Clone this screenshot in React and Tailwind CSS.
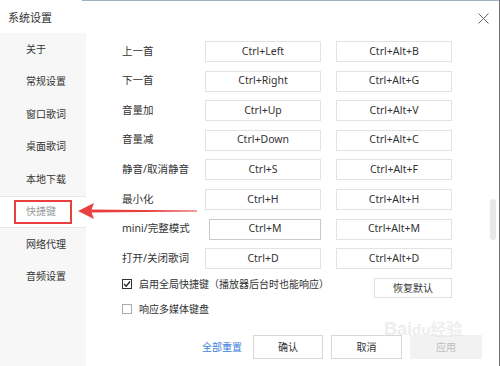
import React from "react";

const font = { fontFamily: '"Noto Sans", "Noto Sans CJK SC", sans-serif' };

const rows = [
  ["上一首", "Ctrl+Left", "Ctrl+Alt+B"],
  ["下一首", "Ctrl+Right", "Ctrl+Alt+G"],
  ["音量加", "Ctrl+Up", "Ctrl+Alt+V"],
  ["音量减", "Ctrl+Down", "Ctrl+Alt+C"],
  ["静音/取消静音", "Ctrl+S", "Ctrl+Alt+F"],
  ["最小化", "Ctrl+H", "Ctrl+Alt+H"],
  ["mini/完整模式", "Ctrl+M", "Ctrl+Alt+M"],
  ["打开/关闭歌词", "Ctrl+D", "Ctrl+Alt+D"],
];

const side = ["关于", "常规设置", "窗口歌词", "桌面歌词", "本地下载", "快捷键", "网络代理", "音频设置"];

export default function App() {
  return (
    <div
      className="relative w-[500px] h-[366px] bg-white overflow-hidden flex flex-col border-r border-[#707070] text-[#333]"
      style={font}
    >
      <div className="flex h-px shrink-0">
        <div className="w-[82px] bg-white" />
        <div className="flex-1 bg-[#9fb0c4]" />
      </div>
      <div className="h-[32px] shrink-0 flex items-center justify-between pl-[8px] pr-[10px]">
        <span className="text-[11px] leading-none text-[#333]">系统设置</span>
        <svg width="11" height="11" viewBox="0 0 11 11" className="mt-[2px]">
          <path d="M0.5 0.5 L10.5 10.5 M10.5 0.5 L0.5 10.5" stroke="#666" strokeWidth="1" fill="none" />
        </svg>
      </div>
      <div className="flex-1 flex min-h-0">
        <div className="w-[86px] shrink-0 bg-[#f7f7f7] flex flex-col">
          {side.map((s) =>
            s === "快捷键" ? (
              <div
                key={s}
                className="h-[32.5px] flex items-center pl-[26px] bg-white border-y border-[#e6e6e6] text-[10px] text-[#999]"
              >
                {s}
              </div>
            ) : (
              <div key={s} className="h-[32.5px] flex items-center pl-[26px] text-[10px] text-[#333]">
                {s}
              </div>
            )
          )}
        </div>
        <div className="flex-1 flex flex-col pl-[36px] pt-[8px]">
          <div className="flex flex-col gap-[8.6px]">
            {rows.map(([l, a, b], i) => (
              <div key={l} className="flex items-center h-[21px]">
                <div className="w-[83px] text-[10.5px] whitespace-nowrap">{l}</div>
                <div
                  className={
                    i === 6
                      ? "ml-[4px] w-[112px] h-[21px] border border-[#c8c8c8] flex items-center justify-center text-[10.5px]"
                      : "w-[116px] h-[21px] border border-[#e3e3e3] flex items-center justify-center text-[10.5px]"
                  }
                >
                  {a}
                </div>
                <div className="ml-[15px] w-[116px] h-[21px] border border-[#e3e3e3] flex items-center justify-center text-[10.5px]">
                  {b}
                </div>
              </div>
            ))}
          </div>
          <div className="flex w-[330px] justify-between mt-[9px]">
            <div className="flex flex-col gap-[15px] pt-[1px]">
              <div className="flex items-center gap-[7px]">
                <div className="w-[10px] h-[10px] border border-[#333] flex items-center justify-center">
                  <svg width="8" height="8" viewBox="0 0 8 8">
                    <path d="M1 4 L3.2 6.2 L7 1.5" stroke="#222" strokeWidth="1.3" fill="none" />
                  </svg>
                </div>
                <span className="text-[10px] leading-none">启用全局快捷键（播放器后台时也能响应）</span>
              </div>
              <div className="flex items-center gap-[7px]">
                <div className="w-[10px] h-[10px] border border-[#aaa]" />
                <span className="text-[10px] leading-none">响应多媒体键盘</span>
              </div>
            </div>
            <div className="w-[78px] h-[20px] border border-[#e0e0e0] flex items-center justify-center text-[10px]">
              恢复默认
            </div>
          </div>
          <div className="flex items-center mt-[21px] pl-[80px]">
            <span className="text-[10px] text-[#3b7dd8] w-[51px]">全部重置</span>
            <div className="w-[70px] h-[24px] border border-[#d8d8d8] flex items-center justify-center text-[10px]">
              确认
            </div>
            <div className="ml-[8px] w-[71px] h-[24px] border border-[#d8d8d8] flex items-center justify-center text-[10px]">
              取消
            </div>
            <div className="ml-[8px] w-[72px] h-[24px] bg-[#f2f2f2] flex items-center justify-center text-[10px] text-[#bdbdbd]">
              应用
            </div>
          </div>
        </div>
        <div className="w-[12px] shrink-0 flex justify-center">
          <div className="mt-[166px] w-[6px] h-[41px] rounded-[3px] bg-[#e8e8e8]" />
        </div>
      </div>

      {/* annotation: red box */}
      <div className="absolute left-[14px] top-[200px] w-[58px] h-[24px] border-2 border-[#e8403f]" />
      {/* annotation: red arrow */}
      <svg className="absolute left-[76px] top-[201px]" width="122" height="20" viewBox="0 0 122 20">
        <path d="M14 8.5 L121 9.5 L121 10.5 L14 11.5 Z" fill="#e8403f" />
        <path d="M2 10 L18 2 L15 10 L18 18 Z" fill="#e8403f" />
      </svg>
      {/* watermark */}
      <div className="absolute left-[384px] top-[320px] leading-none pointer-events-none opacity-60">
        <span className="text-[18px] font-bold text-[#e4e4e4]" style={{ fontFamily: '"Liberation Sans", sans-serif' }}>
          Bai<span className="text-[15px]">du</span>
          <span className="text-[16px]" style={{ fontFamily: '"Noto Sans CJK SC", sans-serif' }}>经验</span>
        </span>
      </div>
    </div>
  );
}
